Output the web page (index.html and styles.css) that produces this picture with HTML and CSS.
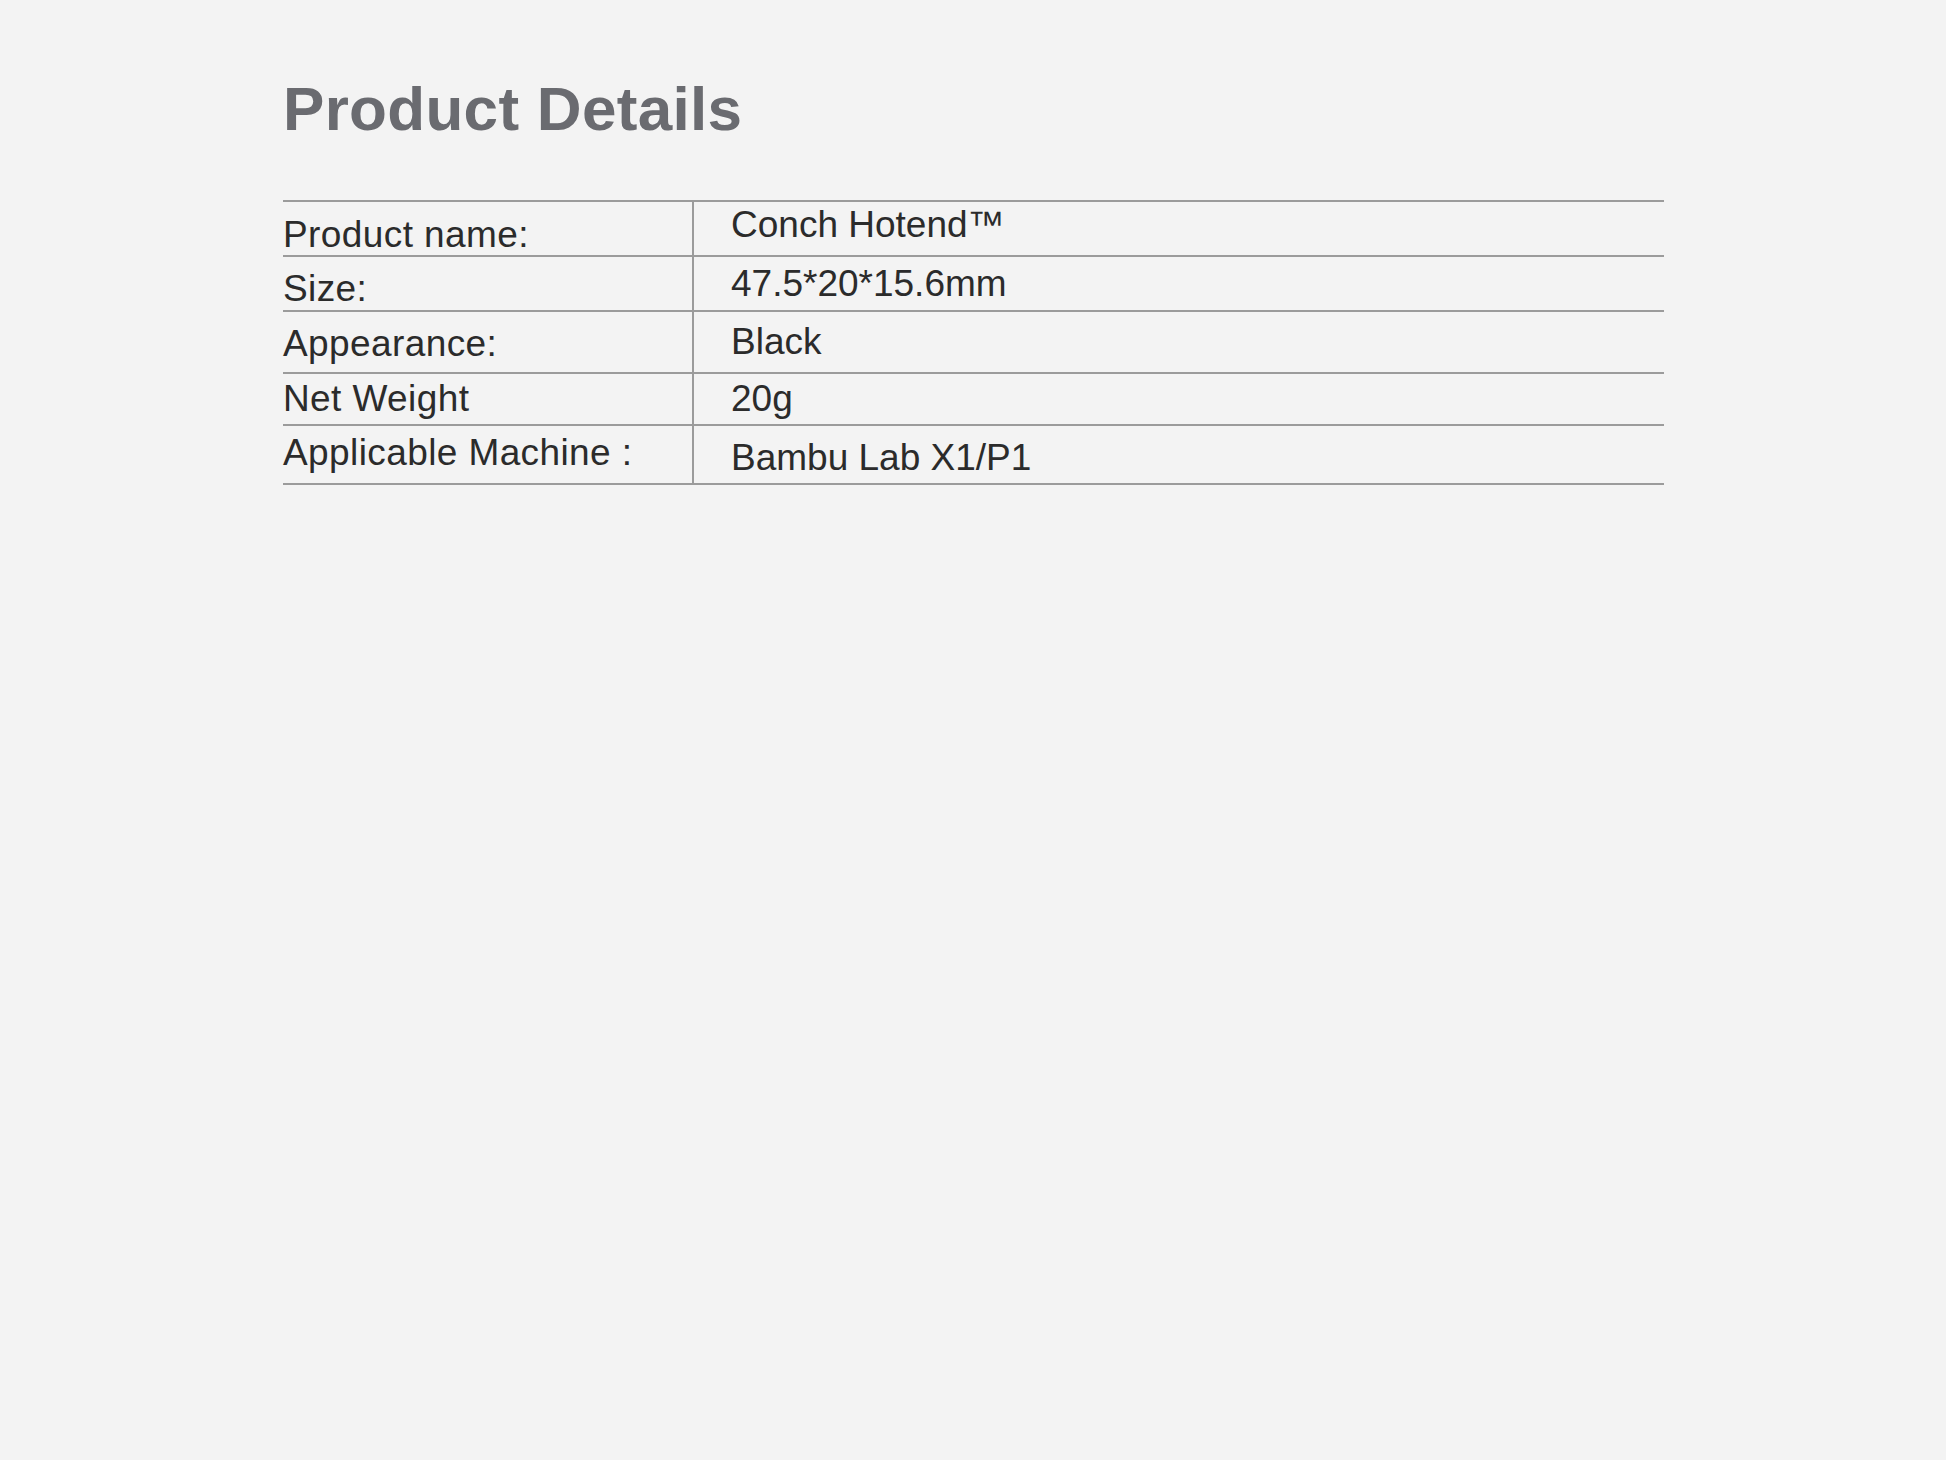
FILE: index.html
```html
<!DOCTYPE html>
<html lang="en">
<head>
    <meta charset="UTF-8">
    <meta name="viewport" content="width=device-width, initial-scale=1.0">
    <title>Product Details</title>
    <link rel="stylesheet" href="styles.css">
</head>
<body>
    <div class="container">
        <h1>Product Details</h1>
        <div class="specs">
            <div class="spec-row">
                <div class="spec-label">Product name:</div>
                <div class="spec-value">Conch Hotend™</div>
            </div>
            <div class="spec-row">
                <div class="spec-label">Size:</div>
                <div class="spec-value">47.5*20*15.6mm</div>
            </div>
            <div class="spec-row">
                <div class="spec-label">Appearance:</div>
                <div class="spec-value">Black</div>
            </div>
            <div class="spec-row">
                <div class="spec-label">Net Weight</div>
                <div class="spec-value">20g</div>
            </div>
            <div class="spec-row">
                <div class="spec-label">Applicable Machine :</div>
                <div class="spec-value">Bambu Lab X1/P1</div>
            </div>
        </div>
    </div>
</body>
</html>
```

FILE: styles.css
```css
body {
    margin: 0;
    padding: 0;
    background-color: #f3f3f3;
    font-family: "Liberation Sans", Arial, sans-serif;
    color: #2b2b2b;
}

.container {
    width: 1381px;
    padding: 78px 0 0 283px;
}

h1 {
    margin: 0 0 60px;
    font-size: 62px;
    line-height: 1;
    font-weight: bold;
    letter-spacing: 0.3px;
    color: #6a6b70;
}

.specs {
    border-bottom: 2px solid #9b9b9b;
}

.spec-row {
    display: grid;
    grid-template-columns: 409px 1fr;
    border-top: 2px solid #9b9b9b;
    font-size: 37px;
    line-height: 1;
}

.spec-label {
    padding-top: var(--label-pad);
    letter-spacing: 0.4px;
}

.spec-value {
    padding-top: var(--value-pad);
    padding-left: 37px;
    border-left: 2px solid #9b9b9b;
}

/* rows are not the same height in the original table */
.spec-row:nth-child(1) { height: 53px; --label-pad: 14px; --value-pad: 4px; }
.spec-row:nth-child(2) { height: 53px; --label-pad: 13px; --value-pad: 8px; }
.spec-row:nth-child(3) { height: 60px; --label-pad: 13px; --value-pad: 11px; }
.spec-row:nth-child(4) { height: 50px; --label-pad: 6px; --value-pad: 6px; }
.spec-row:nth-child(5) { height: 57px; --label-pad: 8px; --value-pad: 13px; }
```
